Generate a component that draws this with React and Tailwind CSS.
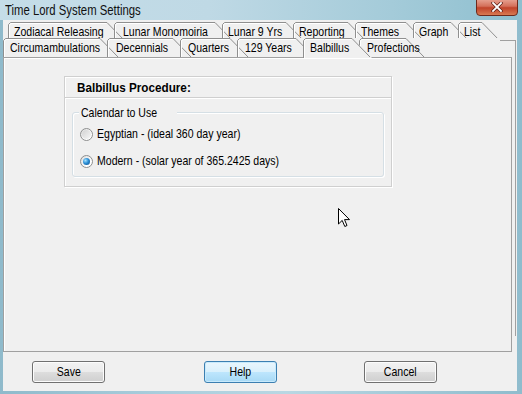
import React from "react";

const backTabs = [
  { label: "Zodiacal Releasing", w: 106, cls: "w-[106px]", pl: "pl-[6px]" },
  { label: "Lunar Monomoiria", w: 108, cls: "w-[108px]", pl: "pl-[9px]" },
  { label: "Lunar 9 Yrs", w: 71, cls: "w-[71px]", pl: "pl-[6px]" },
  { label: "Reporting", w: 62, cls: "w-[62px]", pl: "pl-[6px]" },
  { label: "Themes", w: 58, cls: "w-[58px]", pl: "pl-[6px]" },
  { label: "Graph", w: 45, cls: "w-[45px]", pl: "pl-[6px]" },
  { label: "List", w: 31, cls: "w-[31px]", pl: "pl-[6px]" },
];

const frontTabs = [
  { label: "Circumambulations", w: 104, cls: "w-[104px]", pl: "pl-[7px]" },
  { label: "Decennials", w: 73, cls: "w-[73px]", pl: "pl-[9px]" },
  { label: "Quarters", w: 57, cls: "w-[57px]", pl: "pl-[8px]" },
  { label: "129 Years", w: 66, cls: "w-[66px]", pl: "pl-[8px]" },
  { label: "Balbillus", w: 56, cls: "w-[56px]", pl: "pl-[7px]", active: true },
  { label: "Profections", w: 54, cls: "w-[54px]", pl: "pl-[8px]" },
];

function Tab({ label, w, cls, pl, active }) {
  const H = 19;
  return (
    <div className={`relative shrink-0 h-[19px] ${cls} ${active ? "z-10" : ""}`}>
      <svg
        className="absolute left-0 top-0 overflow-visible"
        width={w + H}
        height={H + 1}
      >
        {active && (
          <path
            d={`M0,${H + 1} V2 L2,0 H${w - 7} L${w - 7 + H + 1},${H + 1} Z`}
            fill="#f0f0f0"
          />
        )}
        <path
          d={`M0.5,${H + (active ? 1 : 0)} V2.5 L2.5,0.5 H${w - 7} L${w - 7 + H - 1},${H}`}
          fill="none"
          stroke="#8f8f8f"
          strokeWidth="1"
        />
        <path
          d={`M1.5,${H + (active ? 1 : 0)} V3 L3,1.5 H${w - 7.5}`}
          fill="none"
          stroke="#ffffff"
          strokeWidth="1"
        />
      </svg>
      <span
        className={`relative block whitespace-nowrap ${pl} leading-[19px] text-[13px] text-black`}
      >
        <span className="inline-block origin-left scale-x-[0.81]">{label}</span>
      </span>
    </div>
  );
}

function Radio({ checked, label }) {
  return (
    <div className="flex items-center h-[16px]">
      <span className="w-[13px] h-[13px] rounded-full border border-[#8e8f8f] bg-[linear-gradient(135deg,#dcdcdc,#ffffff_70%)] flex items-center justify-center shrink-0">
        {checked ? (
          <span className="w-[7px] h-[7px] rounded-full bg-[radial-gradient(circle_at_35%_35%,#a6e3ff,#2c8fd6_45%,#0d4a85)]" />
        ) : (
          <span className="w-[9px] h-[9px] rounded-full bg-[linear-gradient(135deg,#d2d2d2,#f7f7f7)]" />
        )}
      </span>
      <span className="ml-[4px] text-[13px] text-black whitespace-nowrap inline-block origin-left scale-x-[0.81]">
        {label}
      </span>
    </div>
  );
}

function Button({ label, def, cls }) {
  return (
    <div
      className={`h-[22px] w-[73px] rounded-[3px] border flex items-center justify-center text-[13px] text-black ${cls} ${
        def
          ? "border-[#3c7fb1] bg-[linear-gradient(#eaf6fd,#d9f0fc_50%,#bee6fd_50%,#a7d9f5)] shadow-[inset_0_0_0_1px_#c8eafc]"
          : "border-[#707070] bg-[linear-gradient(#f2f2f2,#ebebeb_50%,#dddddd_50%,#cfcfcf)] shadow-[inset_0_0_0_1px_#fcfcfc]"
      }`}
    >
      <span className="inline-block scale-x-[0.81]">{label}</span>
    </div>
  );
}

export default function App() {
  return (
    <div className="w-[522px] h-[394px] flex flex-col bg-[linear-gradient(90deg,#8fbacb,#a9cddc_30%,#b9d7e3_55%,#8fbccd)] font-['Liberation_Sans',sans-serif] overflow-hidden">
      {/* Title bar */}
      <div className="h-[20px] relative flex items-center pl-[5px] bg-[linear-gradient(90deg,#c5dde8,#bfd9e5_40%,#a4cbd9_75%,#8ebfcf)]">
        <span className="text-[14px] text-[#111] leading-none inline-block origin-left scale-x-[0.81]">
          Time Lord System Settings
        </span>
        <div className="absolute right-[4px] top-[-2px] w-[42px] h-[18px] rounded-b-[4px] border border-[#6e2a1c] bg-[linear-gradient(#e8a595,#d4705a_45%,#c0432a_55%,#d87a52)] flex items-center justify-center">
          <svg width="12" height="10" viewBox="0 0 12 10">
            <path d="M2 1 L10 9 M10 1 L2 9" stroke="#5a1d12" strokeWidth="3.2" strokeLinecap="square" />
            <path d="M2 1 L10 9 M10 1 L2 9" stroke="#ffffff" strokeWidth="1.8" strokeLinecap="square" />
          </svg>
        </div>
      </div>

      {/* Client area */}
      <div className="flex-1 ml-[3px] mr-[5px] mb-[3px] bg-[#f0f0f0] flex flex-col relative">
        {/* frame of the back row page, peeking out at the right */}
        <div className="absolute left-[497px] top-[20px] w-[16px] h-[296px] border-t border-r border-[#a0a0a0]" />
        <div className="h-[2px]" />
        {/* back row */}
        <div className="h-[16px] flex pl-[5px] relative overflow-hidden">
          {backTabs.map((t) => (
            <Tab key={t.label} {...t} />
          ))}
        </div>
        {/* front row */}
        <div className="h-[19px] flex relative z-10">
          {frontTabs.map((t) => (
            <Tab key={t.label} {...t} />
          ))}
        </div>
        {/* page */}
        <div className="w-[509px] h-[295px] relative border border-[#a0a0a0] bg-[#f0f0f0] shadow-[inset_1px_1px_0_#ffffff]">
          <div className="ml-[60px] mt-[18px] w-[328px] h-[111px] border border-[#cfcfcf] shadow-[1px_1px_0_#ffffff,inset_1px_1px_0_#ffffff] flex flex-col">
            <div className="h-[21px] flex items-center pl-[12px] pt-[2px] border-b border-[#cfcfcf] shadow-[0_1px_0_#ffffff]">
              <span className="text-[13px] font-bold text-black inline-block origin-left scale-x-[0.9]">
                Balbillus Procedure:
              </span>
            </div>
            <div className="mx-[7px] mt-[14px] h-[65px] rounded-[3px] border border-[#d5dfe5] shadow-[inset_1px_1px_0_#ffffff,1px_1px_0_#ffffff] relative">
              <span className="absolute left-[6px] top-[-8px] px-[2px] bg-[#f0f0f0] text-[13px] leading-[16px] text-black whitespace-nowrap">
                <span className="inline-block origin-left scale-x-[0.81]">Calendar to Use</span>
              </span>
              <div className="pl-[7px] pt-[13px] flex flex-col gap-[11px]">
                <Radio label="Egyptian - (ideal 360 day year)" />
                <Radio checked label="Modern - (solar year of 365.2425 days)" />
              </div>
            </div>
          </div>
          {/* mouse cursor */}
          <svg className="absolute left-[334px] top-[150px]" width="13" height="20" viewBox="0 0 13 20">
            <path d="M0.5 0.5 L0.5 16 L4.2 12.4 L6.8 18.5 L9 17.5 L6.5 11.6 L11.5 11.6 Z" fill="#ffffff" stroke="#000000" strokeWidth="1" strokeLinejoin="miter" />
          </svg>
        </div>
        {/* buttons */}
        <div className="h-[39px] flex items-start pt-[9px] pl-[29px]">
          <Button label="Save" />
          <Button label="Help" def cls="ml-[99px]" />
          <Button label="Cancel" cls="ml-[87px]" />
        </div>
      </div>
    </div>
  );
}
